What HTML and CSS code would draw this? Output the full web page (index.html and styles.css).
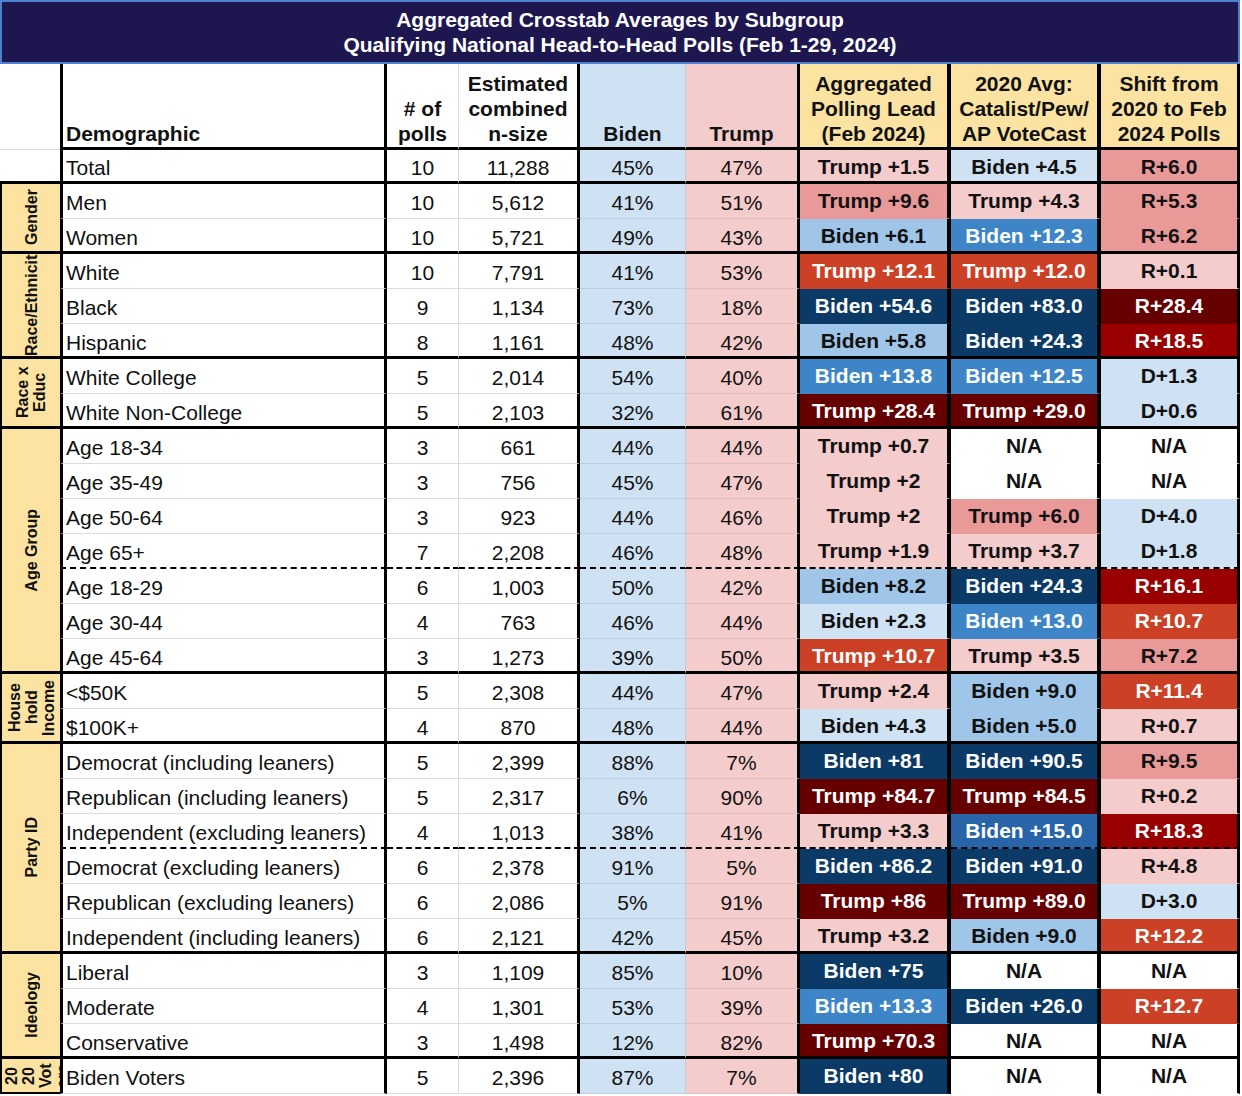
FILE: index.html
```html
<!DOCTYPE html>
<html lang="en">
<head>
<meta charset="utf-8">
<title>Aggregated Crosstab Averages by Subgroup</title>
<link rel="stylesheet" href="styles.css">
</head>
<body>
<div class="sheet">
  <div class="title">Aggregated Crosstab Averages by Subgroup<br>Qualifying National Head-to-Head Polls (Feb 1-29, 2024)</div>
  <div class="tbl">
    <div class="row hd">
      <div class="c0"></div>
      <div class="nm">Demographic</div>
      <div class="np"># of<br>polls</div>
      <div class="ns">Estimated<br>combined<br>n-size</div>
      <div class="bi">Biden</div>
      <div class="tr">Trump</div>
      <div class="l1">Aggregated<br>Polling Lead<br>(Feb 2024)</div>
      <div class="l2">2020 Avg:<br>Catalist/Pew/<br>AP VoteCast</div>
      <div class="l3">Shift from<br>2020 to Feb<br>2024 Polls</div>
    </div>
    <div class="row tot end">
      <div class="c0"></div>
      <div class="nm">Total</div><div class="np">10</div><div class="ns">11,288</div><div class="bi">45%</div><div class="tr">47%</div>
      <div class="l1 lp">Trump +1.5</div><div class="l2 lb">Biden +4.5</div><div class="l3 mp">R+6.0</div>
    </div>

    <div class="row">
      <div class="g s2"><span>Gender</span></div>
      <div class="nm">Men</div><div class="np">10</div><div class="ns">5,612</div><div class="bi">41%</div><div class="tr">51%</div>
      <div class="l1 mp">Trump +9.6</div><div class="l2 lp">Trump +4.3</div><div class="l3 mp">R+5.3</div>
    </div>
    <div class="row end">
      <div class="nm">Women</div><div class="np">10</div><div class="ns">5,721</div><div class="bi">49%</div><div class="tr">43%</div>
      <div class="l1 mb">Biden +6.1</div><div class="l2 b">Biden +12.3</div><div class="l3 mp">R+6.2</div>
    </div>

    <div class="row">
      <div class="g s3 one"><span>Race/Ethnicity</span></div>
      <div class="nm">White</div><div class="np">10</div><div class="ns">7,791</div><div class="bi">41%</div><div class="tr">53%</div>
      <div class="l1 r">Trump +12.1</div><div class="l2 r">Trump +12.0</div><div class="l3 lp">R+0.1</div>
    </div>
    <div class="row">
      <div class="nm">Black</div><div class="np">9</div><div class="ns">1,134</div><div class="bi">73%</div><div class="tr">18%</div>
      <div class="l1 db">Biden +54.6</div><div class="l2 db">Biden +83.0</div><div class="l3 dr">R+28.4</div>
    </div>
    <div class="row end">
      <div class="nm">Hispanic</div><div class="np">8</div><div class="ns">1,161</div><div class="bi">48%</div><div class="tr">42%</div>
      <div class="l1 mb">Biden +5.8</div><div class="l2 db">Biden +24.3</div><div class="l3 rr">R+18.5</div>
    </div>

    <div class="row">
      <div class="g s2"><span>Race x Educ</span></div>
      <div class="nm">White College</div><div class="np">5</div><div class="ns">2,014</div><div class="bi">54%</div><div class="tr">40%</div>
      <div class="l1 b">Biden +13.8</div><div class="l2 b">Biden +12.5</div><div class="l3 lb">D+1.3</div>
    </div>
    <div class="row end">
      <div class="nm">White Non-College</div><div class="np">5</div><div class="ns">2,103</div><div class="bi">32%</div><div class="tr">61%</div>
      <div class="l1 dr">Trump +28.4</div><div class="l2 dr">Trump +29.0</div><div class="l3 lb">D+0.6</div>
    </div>

    <div class="row">
      <div class="g s7"><span>Age Group</span></div>
      <div class="nm">Age 18-34</div><div class="np">3</div><div class="ns">661</div><div class="bi">44%</div><div class="tr">44%</div>
      <div class="l1 lp">Trump +0.7</div><div class="l2 na">N/A</div><div class="l3 na">N/A</div>
    </div>
    <div class="row">
      <div class="nm">Age 35-49</div><div class="np">3</div><div class="ns">756</div><div class="bi">45%</div><div class="tr">47%</div>
      <div class="l1 lp">Trump +2</div><div class="l2 na">N/A</div><div class="l3 na">N/A</div>
    </div>
    <div class="row">
      <div class="nm">Age 50-64</div><div class="np">3</div><div class="ns">923</div><div class="bi">44%</div><div class="tr">46%</div>
      <div class="l1 lp">Trump +2</div><div class="l2 mp">Trump +6.0</div><div class="l3 lb">D+4.0</div>
    </div>
    <div class="row dash">
      <div class="nm">Age 65+</div><div class="np">7</div><div class="ns">2,208</div><div class="bi">46%</div><div class="tr">48%</div>
      <div class="l1 lp">Trump +1.9</div><div class="l2 lp">Trump +3.7</div><div class="l3 lb">D+1.8</div>
    </div>
    <div class="row">
      <div class="nm">Age 18-29</div><div class="np">6</div><div class="ns">1,003</div><div class="bi">50%</div><div class="tr">42%</div>
      <div class="l1 mb">Biden +8.2</div><div class="l2 db">Biden +24.3</div><div class="l3 rr">R+16.1</div>
    </div>
    <div class="row">
      <div class="nm">Age 30-44</div><div class="np">4</div><div class="ns">763</div><div class="bi">46%</div><div class="tr">44%</div>
      <div class="l1 lb">Biden +2.3</div><div class="l2 b">Biden +13.0</div><div class="l3 r">R+10.7</div>
    </div>
    <div class="row end">
      <div class="nm">Age 45-64</div><div class="np">3</div><div class="ns">1,273</div><div class="bi">39%</div><div class="tr">50%</div>
      <div class="l1 r">Trump +10.7</div><div class="l2 lp">Trump +3.5</div><div class="l3 mp">R+7.2</div>
    </div>

    <div class="row">
      <div class="g s2"><span>House hold Income</span></div>
      <div class="nm">&lt;$50K</div><div class="np">5</div><div class="ns">2,308</div><div class="bi">44%</div><div class="tr">47%</div>
      <div class="l1 lp">Trump +2.4</div><div class="l2 mb">Biden +9.0</div><div class="l3 r">R+11.4</div>
    </div>
    <div class="row end">
      <div class="nm">$100K+</div><div class="np">4</div><div class="ns">870</div><div class="bi">48%</div><div class="tr">44%</div>
      <div class="l1 lb">Biden +4.3</div><div class="l2 mb">Biden +5.0</div><div class="l3 lp">R+0.7</div>
    </div>

    <div class="row">
      <div class="g s6"><span>Party ID</span></div>
      <div class="nm">Democrat (including leaners)</div><div class="np">5</div><div class="ns">2,399</div><div class="bi">88%</div><div class="tr">7%</div>
      <div class="l1 db">Biden +81</div><div class="l2 db">Biden +90.5</div><div class="l3 mp">R+9.5</div>
    </div>
    <div class="row">
      <div class="nm">Republican (including leaners)</div><div class="np">5</div><div class="ns">2,317</div><div class="bi">6%</div><div class="tr">90%</div>
      <div class="l1 dr">Trump +84.7</div><div class="l2 dr">Trump +84.5</div><div class="l3 lp">R+0.2</div>
    </div>
    <div class="row dash">
      <div class="nm">Independent (excluding leaners)</div><div class="np">4</div><div class="ns">1,013</div><div class="bi">38%</div><div class="tr">41%</div>
      <div class="l1 lp">Trump +3.3</div><div class="l2 bx">Biden +15.0</div><div class="l3 rr">R+18.3</div>
    </div>
    <div class="row">
      <div class="nm">Democrat (excluding leaners)</div><div class="np">6</div><div class="ns">2,378</div><div class="bi">91%</div><div class="tr">5%</div>
      <div class="l1 db">Biden +86.2</div><div class="l2 db">Biden +91.0</div><div class="l3 lp">R+4.8</div>
    </div>
    <div class="row">
      <div class="nm">Republican (excluding leaners)</div><div class="np">6</div><div class="ns">2,086</div><div class="bi">5%</div><div class="tr">91%</div>
      <div class="l1 dr">Trump +86</div><div class="l2 dr">Trump +89.0</div><div class="l3 lb">D+3.0</div>
    </div>
    <div class="row end">
      <div class="nm">Independent (including leaners)</div><div class="np">6</div><div class="ns">2,121</div><div class="bi">42%</div><div class="tr">45%</div>
      <div class="l1 lp">Trump +3.2</div><div class="l2 mb">Biden +9.0</div><div class="l3 r">R+12.2</div>
    </div>

    <div class="row">
      <div class="g s3"><span>Ideology</span></div>
      <div class="nm">Liberal</div><div class="np">3</div><div class="ns">1,109</div><div class="bi">85%</div><div class="tr">10%</div>
      <div class="l1 db">Biden +75</div><div class="l2 na">N/A</div><div class="l3 na">N/A</div>
    </div>
    <div class="row">
      <div class="nm">Moderate</div><div class="np">4</div><div class="ns">1,301</div><div class="bi">53%</div><div class="tr">39%</div>
      <div class="l1 b">Biden +13.3</div><div class="l2 db">Biden +26.0</div><div class="l3 r">R+12.7</div>
    </div>
    <div class="row end">
      <div class="nm">Conservative</div><div class="np">3</div><div class="ns">1,498</div><div class="bi">12%</div><div class="tr">82%</div>
      <div class="l1 dr">Trump +70.3</div><div class="l2 na">N/A</div><div class="l3 na">N/A</div>
    </div>

    <div class="row">
      <div class="g s1 tight"><span>2020 Voters</span></div>
      <div class="nm">Biden Voters</div><div class="np">5</div><div class="ns">2,396</div><div class="bi">87%</div><div class="tr">7%</div>
      <div class="l1 db">Biden +80</div><div class="l2 na">N/A</div><div class="l3 na">N/A</div>
    </div>
  </div>
</div>
</body>
</html>
```

FILE: styles.css
```css
body {
  margin: 0;
  background: #fff;
  font-family: "Liberation Sans", Arial, Helvetica, sans-serif;
  color: #111;
}

.sheet {
  width: 1240px;
}

.title {
  box-sizing: border-box;
  height: 64px;
  padding-top: 5px;
  background: #1e174f;
  border: 2px solid #4c82d0;
  color: #fff;
  font-weight: bold;
  font-size: 21px;
  line-height: 25px;
  text-align: center;
}

.tbl {
  display: grid;
  grid-template-columns: 60px 327px 72px 121px 106px 114px 151px 150px 139px;
  grid-template-rows: 86px 34px repeat(26, 35px);
}

.row {
  display: contents;
}

.row > div {
  box-sizing: border-box;
  display: flex;
  align-items: flex-end;
  justify-content: center;
  padding: 0 4px 3px;
  border-bottom: 1px solid #dcdcdc;
  font-size: 21px;
  line-height: 24px;
  white-space: nowrap;
  overflow: hidden;
}

/* columns */
.row > .c0 { grid-column: 1; }
.row > .nm {
  grid-column: 2;
  justify-content: flex-start;
  padding-left: 3px;
  border-left: 3px solid #000;
  border-right: 3px solid #000;
}
.row > .np { border-right: 1px solid #dcdcdc; }
.row > .ns { border-right: 3px solid #000; }
.row > .bi {
  background: #cfe2f3;
  border-right: 1px solid #c7cbd0;
  border-bottom-color: rgba(0, 0, 0, 0.08);
}
.row > .tr {
  background: #f4cccc;
  border-right: 3px solid #000;
  border-bottom-color: rgba(0, 0, 0, 0.08);
}
.row > .l1,
.row > .l2,
.row > .l3 {
  align-items: center;
  padding: 0 2px;
  font-weight: bold;
  border-bottom-color: transparent;
}
.row > .l1 { border-right: 4px solid #000; }
.row > .l2 { border-right: 4px solid #000; }
.row > .l3 { border-right: 3px solid #000; }

/* header row */
.hd > div {
  font-weight: bold;
  line-height: 25px;
  text-align: center;
}
.row.hd > div {
  padding-bottom: 1px;
  border-bottom: 3px solid #000;
}
.row.hd > .l1,
.row.hd > .l2,
.row.hd > .l3 {
  align-items: flex-end;
  padding-bottom: 1px;
  background: #fce3a2;
  border-bottom: 3px solid #000;
}
.row.hd > .c0 { border-bottom: 1px solid #dcdcdc; }

/* group separators: keep text at the same height as in ordinary rows */
.row.end > div {
  border-bottom: 3px solid #000;
  padding-bottom: 1px;
}
.row.end > .l1,
.row.end > .l2,
.row.end > .l3 {
  padding-top: 2px;
  padding-bottom: 0;
}
.row.dash > div {
  border-bottom: 2px dashed #000;
  padding-bottom: 2px;
}
.row.dash > .l1,
.row.dash > .l2,
.row.dash > .l3 {
  padding-top: 1px;
  padding-bottom: 0;
}

/* group labels */
.row > .g {
  grid-column: 1;
  padding: 0;
  align-items: center;
  justify-content: center;
  background: #fce3a2;
  border-left: 2px solid #000;
  border-bottom: 3px solid #000;
  font-size: 16px;
  font-weight: bold;
  line-height: 17px;
  white-space: normal;
  color: #111;
}
.g span {
  writing-mode: vertical-rl;
  transform: rotate(180deg);
  text-align: center;
  max-height: 100%;
}
.g.one span { white-space: nowrap; }
.row > .g.tight {
  justify-content: flex-start;
  padding-left: 1px;
  border-bottom: 2px solid #000;
}
.g.tight span {
  height: 26px;
  overflow-wrap: anywhere;
}
.s1 { grid-row: span 1; }
.s2 { grid-row: span 2; }
.s3 { grid-row: span 3; }
.s6 { grid-row: span 6; }
.s7 { grid-row: span 7; }

/* lead colours */
.lp { background: #f4cccc; }
.mp { background: #ea9999; }
.r  { background: #cc4125; color: #fff; }
.rr { background: #990000; color: #fff; }
.dr { background: #660000; color: #fff; }
.lb { background: #cfe2f3; }
.mb { background: #9fc5e8; }
.b  { background: #3d85c6; color: #fff; }
.bx { background: #2764a8; color: #fff; }
.db { background: #0b3a67; color: #fff; }
.na { background: #fff; }
```
